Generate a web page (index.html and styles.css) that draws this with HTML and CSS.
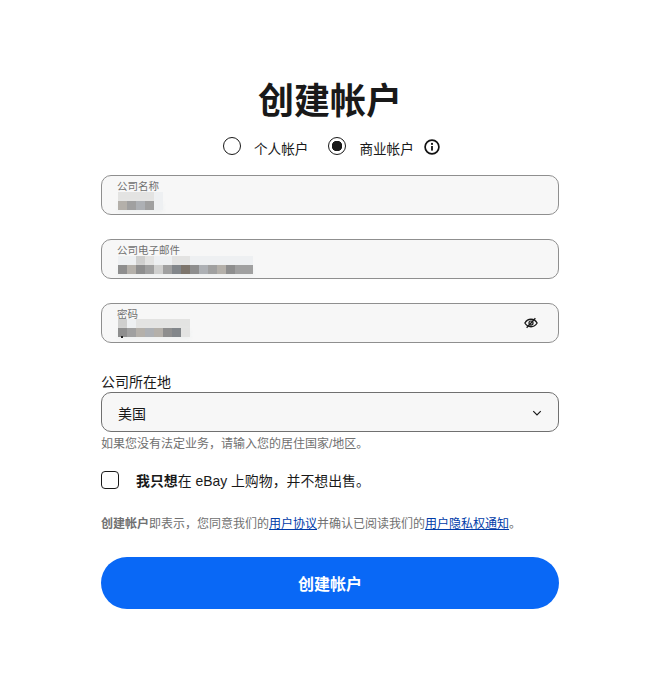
FILE: index.html
```html
<!DOCTYPE html>
<html lang="zh-CN">
<head>
<meta charset="utf-8">
<title>创建帐户</title>
<link rel="stylesheet" href="styles.css">
</head>
<body>
<main class="page">
  <h1 class="title">创建帐户</h1>
  <div class="account-type">
    <label class="radio-option"><span class="radio"></span><span>个人帐户</span></label>
    <label class="radio-option"><span class="radio radio-on"></span><span>商业帐户</span></label>
    <svg class="info" viewBox="0 0 16 16" aria-hidden="true"><circle cx="8" cy="8" r="6.9" fill="none" stroke="#111" stroke-width="1.7"/><rect x="7.1" y="7" width="1.8" height="4.6" fill="#111"/><circle cx="8" cy="4.9" r="1.1" fill="#111"/></svg>
  </div>

  <div class="field">
    <span class="field-label">公司名称</span>
    <div class="mosaic">
      <div class="m-row"><i class="c1"></i><i class="c1"></i><i class="c1"></i><i class="c1"></i><i class="c0"></i></div>
      <div class="m-row"><i class="c3"></i><i class="c4"></i><i class="c3b"></i><i class="c4"></i><i class="c0"></i></div>
    </div>
  </div>

  <div class="field">
    <span class="field-label">公司电子邮件</span>
    <div class="mosaic">
      <div class="m-row"><i class="c0"></i><i class="c0"></i><i class="c2"></i><i class="c1"></i><i class="c0"></i><i class="c0"></i><i class="c1"></i><i class="c1"></i><i class="c0"></i><i class="c0"></i><i class="c0"></i><i class="c0"></i><i class="c0"></i><i class="c0"></i><i class="c0"></i></div>
      <div class="m-row"><i class="c5"></i><i class="c3"></i><i class="c5"></i><i class="c4"></i><i class="c2"></i><i class="c4"></i><i class="c6"></i><i class="c7"></i><i class="c5"></i><i class="c3b"></i><i class="c4"></i><i class="c3"></i><i class="c5"></i><i class="c4"></i><i class="c4"></i></div>
    </div>
  </div>

  <div class="field field-pw">
    <div class="field-body">
      <span class="field-label">密码</span>
      <div class="mosaic">
        <div class="m-row"><i class="c2"></i><i class="c0"></i><i class="c1"></i><i class="c1"></i><i class="c1"></i><i class="c1"></i><i class="c1"></i><i class="c1"></i></div>
        <div class="m-row m-dot"><i class="c5"></i><i class="c4"></i><i class="c3"></i><i class="c3b"></i><i class="c3"></i><i class="c5"></i><i class="c6"></i><i class="c1"></i></div>
      </div>
    </div>
    <svg class="eye" viewBox="0 0 16 16" aria-hidden="true"><path d="M1 8c1.700-2.900 4-4.300 7-4.300S13.300 5.100 15 8c-1.700 2.900-4 4.300-7 4.300S2.700 10.900 1 8z" fill="none" stroke="#191919" stroke-width="1.500"/><circle cx="8" cy="8" r="2.300" fill="none" stroke="#191919" stroke-width="1.400"/><path d="M3 13.500 13 2.500" stroke="#191919" stroke-width="1.500"/></svg>
  </div>

  <label class="select-label">公司所在地</label>
  <div class="select">
    <span class="select-value">美国</span>
    <svg class="chevron" viewBox="0 0 12 12" aria-hidden="true"><path d="M1.500 3.800 6 8.300l4.500-4.500" fill="none" stroke="#191919" stroke-width="1.400"/></svg>
  </div>
  <p class="help">如果您没有法定业务，请输入您的居住国家/地区。</p>

  <label class="check-row">
    <span class="checkbox"></span>
    <span class="check-text"><b>我只想</b>在 eBay 上购物，并不想出售。</span>
  </label>

  <p class="legal"><b>创建帐户</b>即表示，您同意我们的<a href="#">用户协议</a>并确认已阅读我们的<a href="#">用户隐私权通知</a>。</p>

  <button class="submit" type="button">创建帐户</button>
</main>
</body>
</html>
```

FILE: styles.css
```css
* { box-sizing: border-box; }
html, body { margin: 0; padding: 0; background: #fff; }
body {
  font-family: "Liberation Sans", "Noto Sans CJK SC", sans-serif;
  color: #191919;
}
.page {
  width: 458px;
  margin-left: 101px;
  padding-top: 78px;
  display: flex;
  flex-direction: column;
}
.title {
  margin: 0;
  height: 48px;
  font-size: 36px;
  line-height: 48px;
  font-weight: 700;
  text-align: center;
  color: #191919;
}
.account-type {
  margin-top: 10px;
  margin-bottom: 10px;
  height: 20px;
  display: flex;
  align-items: center;
  padding-left: 122px;
  font-size: 13.600px;
}
.radio-option { display: flex; align-items: center; gap: 13px; line-height: 20px; margin-right: 20px; }
.radio-option + .radio-option { margin-right: 10px; }
.radio-option span:last-child { padding-top: 6px; margin-bottom: -2px; }
.radio {
  width: 18px;
  height: 18px;
  border: 1.500px solid #191919;
  border-radius: 50%;
  background: #fff;
  display: block;
}
.radio-on { background: radial-gradient(circle, #191919 0 5px, #fff 5.500px); }
.info { width: 16px; height: 16px; margin-top: 1px; }

.field {
  height: 40px;
  margin-top: 9px;
  margin-bottom: 15px;
  border: 1px solid #8f8f8f;
  border-radius: 10px;
  background: #f7f7f7;
  padding: 3px 16px 0 15px;
  overflow: hidden;
}
.field-pw { display: flex; justify-content: space-between; align-items: center; padding: 0 20px 0 15px; }
.field-pw .mosaic { margin-top: -2px; }
.field-body { padding-top: 3px; align-self: flex-start; }
.field-label {
  display: block;
  height: 14px;
  font-size: 10.500px;
  line-height: 14px;
  color: #707070;
}
.mosaic { margin-top: -1px; margin-left: 1px; width: fit-content; }
.m-row { display: flex; height: 9px; position: relative; }
.m-row:last-child { box-shadow: 0 2px 4px #eef0f0; }
.m-row i { display: block; width: 9px; height: 9px; }
.m-dot::after {
  content: "";
  position: absolute;
  left: 3px;
  top: 8px;
  width: 2px;
  height: 2px;
  background: #222;
}
.c0 { background: #eef0f2; }
.c1 { background: #e3e3e2; }
.c2 { background: #cfcfce; }
.c3 { background: #b4b0aa; }
.c3b { background: #adb0b4; }
.c4 { background: #a0a0a0; }
.c5 { background: #8e8e8e; }
.c6 { background: #82868a; }
.c7 { background: #7d756c; }
.eye { width: 14px; height: 14px; flex: none; }

.select-label {
  margin-top: 14px;
  font-size: 14px;
  line-height: 20px;
  height: 20px;
}
.select {
  height: 40px;
  border: 1px solid #707070;
  border-radius: 10px;
  background: #f7f7f7;
  display: flex;
  align-items: center;
  justify-content: space-between;
  padding: 0 16px 0 16px;
  font-size: 14px;
}
.select-value { padding-top: 2px; }
.chevron { width: 10px; height: 10px; margin-top: 1px; }
.help {
  margin: 3px 0 0;
  font-size: 12px;
  line-height: 18px;
  color: #707070;
}
.check-row {
  margin-top: 17px;
  display: flex;
  align-items: center;
  gap: 17px;
  font-size: 13.900px;
  line-height: 20px;
}
.check-text { padding-top: 1px; margin-bottom: -1px; }
.checkbox {
  width: 18px;
  height: 18px;
  border: 1.500px solid #191919;
  border-radius: 4px;
  background: #fff;
  flex: none;
}
.legal {
  margin: 25px 0 0;
  font-size: 12px;
  line-height: 18px;
  color: #707070;
}
.legal a { color: #003ba8; text-decoration: underline; }
.submit {
  margin-top: 24px;
  height: 52px;
  border: 0;
  border-radius: 26px;
  background: #0968f6;
  color: #fff;
  font: 700 16px "Liberation Sans", "Noto Sans CJK SC", sans-serif;
}
```
